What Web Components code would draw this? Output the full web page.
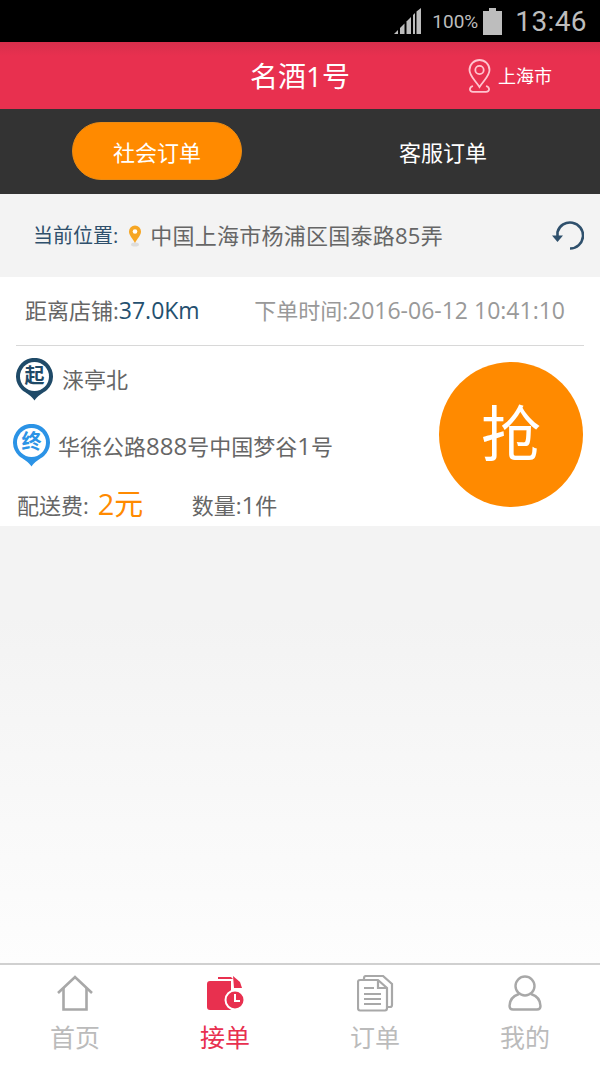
<!DOCTYPE html>
<html lang="zh">
<head>
<meta charset="utf-8">
<title>名酒1号</title>
<style>
    html, body { margin: 0; padding: 0; }
    body {
        width: 600px;
        height: 1067px;
        overflow: hidden;
        display: flex;
        flex-direction: column;
        font-family: "Open Sans", "Noto Sans CJK SC", sans-serif;
    }
    page-body { flex: 1; }
</style>
</head>
<body>
<status-bar></status-bar>
<app-header heading="名酒1号" city="上海市"></app-header>
<order-tabs></order-tabs>
<page-body>
    <location-bar address="中国上海市杨浦区国泰路85弄"></location-bar>
    <order-card></order-card>
</page-body>
<tab-bar>
    <tab-item label="首页">
        <svg width="36" height="36" viewBox="0 0 36 36" fill="none" stroke="#a8a8a8" stroke-width="2.6">
            <path d="M1 18 L18 2 L35 18"/>
            <path d="M6.5 13 V34.5 H29.5 V13"/>
        </svg>
    </tab-item>
    <tab-item label="接单" active>
        <svg width="37" height="36" viewBox="0 0 37 36">
            <path d="M11 2 H24 L26 4 H11 Z" fill="#e8304f"/>
            <path d="M26 1 L33 7 L35 13 H27 Z" fill="#e8304f"/>
            <path d="M3 6 H24 V28 H28 V35 H3 Q0 35 0 32 V9 Q0 6 3 6 Z" fill="#e8304f"/>
            <circle cx="28" cy="25" r="9.5" fill="#e8304f" stroke="#fff" stroke-width="2"/>
            <path d="M28 19 V26 H33" fill="none" stroke="#fff" stroke-width="2"/>
        </svg>
    </tab-item>
    <tab-item label="订单">
        <svg width="37" height="37" viewBox="0 0 37 37" fill="none" stroke="#a8a8a8" stroke-width="2.2">
            <path d="M7 5 V3 Q7 1 9 1 H26 L35 9 V30 Q35 32 33 32 H31"/>
            <path d="M3 5 H21 L30 13 V33 Q30 35.5 28 35.5 H3 Q1 35.5 1 33 V7 Q1 5 3 5 Z" fill="#fff"/>
            <path d="M21 5 V13 H30"/>
            <path d="M7 13 H17 M7 19 H24 M7 24 H24 M7 29 H24"/>
        </svg>
    </tab-item>
    <tab-item label="我的">
        <svg width="34" height="36" viewBox="0 0 34 36" fill="none" stroke="#a8a8a8" stroke-width="2.4">
            <circle cx="17" cy="11" r="9.5"/>
            <path d="M11 19 C5 21 1.5 25 1.5 31 Q1.5 34.5 5 34.5 H29 Q32.5 34.5 32.5 31 C32.5 25 29 21 23 19"/>
        </svg>
    </tab-item>
</tab-bar>

<script>
class StatusBar extends HTMLElement {
    constructor() {
        super();
        this.attachShadow({ mode: "open" });
        this.shadowRoot.innerHTML = `
            <style>
                :host {
                    display: flex;
                    align-items: center;
                    justify-content: flex-end;
                    height: 42px;
                    padding-right: 13px;
                    background: #000;
                    color: #bdbdbd;
                    font-family: Roboto, sans-serif;
                }
                .pct { font-size: 19px; margin: 0 5px 0 11px; }
                .time { font-size: 28px; margin-left: 13px; letter-spacing: 0.4px; }
                svg { display: block; }
            </style>
            <svg width="27" height="27" viewBox="0 0 27 27" fill="#bdbdbd">
                <path d="M0 26 L4 22 V26 Z"/>
                <path d="M6 26 V20 L10.5 15.5 V26 Z"/>
                <path d="M12.5 26 V13.5 L17 9 V26 Z"/>
                <path d="M19 26 V7 L21 5 V26 Z"/>
                <path d="M22.5 26 V3.5 L27 0 V26 Z"/>
            </svg>
            <span class="pct">100%</span>
            <svg width="19" height="27" viewBox="0 0 19 27" fill="#bdbdbd">
                <path d="M6 0 H13 V3 H19 V27 H0 V3 H6 Z"/>
            </svg>
            <span class="time">13:46</span>
        `;
    }
}

class AppHeader extends HTMLElement {
    constructor() {
        super();
        this.attachShadow({ mode: "open" });
        this.shadowRoot.innerHTML = `
            <style>
                :host {
                    display: grid;
                    grid-template-columns: 1fr auto 1fr;
                    align-items: center;
                    height: 67px;
                    background: linear-gradient(#d82f4c, #e8304f 14px);
                    color: #fff;
                }
                .title { grid-column: 2; font-size: 28px; line-height: 36px; }
                .city {
                    display: flex;
                    align-items: center;
                    justify-content: flex-end;
                    gap: 7px;
                    padding-right: 48px;
                    font-size: 18px;
                    line-height: 24px;
                }
                svg { display: block; }
            </style>
            <div class="title"></div>
            <div class="city">
                <svg width="23" height="34" viewBox="0 0 23 34" fill="none" stroke="#ffc4cf" stroke-width="1.8">
                    <path d="M11.5 28 C7 21 1.5 17 1.5 11 A10 10 0 0 1 21.5 11 C21.5 17 16 21 11.5 28 Z"/>
                    <circle cx="11.5" cy="11" r="4.2"/>
                    <path d="M5 27 C1 28 0.8 32.8 5 32.8 H18 C22.2 32.8 22 28 18 27"/>
                </svg>
                <span></span>
            </div>
        `;
    }

    connectedCallback() {
        this.shadowRoot.querySelector(".title").textContent = this.getAttribute("heading");
        this.shadowRoot.querySelector(".city span").textContent = this.getAttribute("city");
    }
}

class OrderTabs extends HTMLElement {
    constructor() {
        super();
        this.attachShadow({ mode: "open" });
        this.shadowRoot.innerHTML = `
            <style>
                :host {
                    display: flex;
                    justify-content: center;
                    align-items: center;
                    gap: 116px;
                    height: 85px;
                    background: #333;
                    color: #fff;
                    font-size: 22px;
                }
                div {
                    width: 170px;
                    height: 58px;
                    box-sizing: border-box;
                    display: flex;
                    align-items: center;
                    justify-content: center;
                    border-radius: 29px;
                    margin-top: -1px;
                }
                .on { background: #ff8a00; border: 1px solid #e98a14; }
            </style>
            <div class="on">社会订单</div>
            <div>客服订单</div>
        `;
    }
}

class PageBody extends HTMLElement {
    constructor() {
        super();
        this.attachShadow({ mode: "open" });
        this.shadowRoot.innerHTML = `
            <style>
                :host {
                    display: block;
                    background: linear-gradient(#f3f3f3 55%, #fdfdfd);
                }
            </style>
            <slot></slot>
        `;
    }
}

class LocationBar extends HTMLElement {
    constructor() {
        super();
        this.attachShadow({ mode: "open" });
        this.shadowRoot.innerHTML = `
            <style>
                :host {
                    display: flex;
                    align-items: center;
                    height: 83px;
                    padding: 0 16px 0 33px;
                    box-sizing: border-box;
                    color: #666;
                    font-size: 22px;
                }
                .label { font-size: 20px; color: #2f506c; margin-top: -2px; }
                .pin { margin: 0 8px 0 10px; }
                .addr { flex: 1; margin-top: -4px; letter-spacing: 0.25px; }
                svg { display: block; }
            </style>
            <span class="label">当前位置:</span>
            <svg class="pin" width="14" height="22" viewBox="0 0 14 22">
                <ellipse cx="7" cy="19.5" rx="4" ry="2" fill="#ddd"/>
                <path d="M7 18 C4.5 13 1 10.5 1 6.5 A6 6 0 0 1 13 6.5 C13 10.5 9.5 13 7 18 Z" fill="#f6a623"/>
                <circle cx="7" cy="6.5" r="2.3" fill="#fff"/>
            </svg>
            <span class="addr"></span>
            <svg width="32" height="32" viewBox="0 0 32 32" fill="none">
                <path d="M18 28.5 A13 13 0 1 0 5.5 12 V16" stroke="#2f506c" stroke-width="2.6"/>
                <path d="M0 15.5 H11 L5.5 22 Z" fill="#2f506c"/>
            </svg>
        `;
    }

    connectedCallback() {
        this.shadowRoot.querySelector(".addr").textContent = this.getAttribute("address");
    }
}

class RoutePin extends HTMLElement {
    constructor() {
        super();
        this.attachShadow({ mode: "open" });
        this.shadowRoot.innerHTML = `
            <style>
                :host {
                    position: relative;
                    display: block;
                    width: 37px;
                    height: 43px;
                    flex: none;
                }
                svg { display: block; }
                span {
                    position: absolute;
                    left: 0;
                    top: 0;
                    width: 37px;
                    height: 37px;
                    line-height: 36px;
                    text-align: center;
                    font-size: 20px;
                    font-weight: 700;
                }
            </style>
            <svg width="37" height="43" viewBox="0 0 37 43">
                <path d="M18.5 42.5 C16 38 10 35 6 32 A18.5 18.5 0 1 1 31 32 C27 35 21 38 18.5 42.5 Z"/>
                <circle cx="18.5" cy="18.5" r="14.5" fill="#fff"/>
            </svg>
            <span></span>
        `;
    }

    connectedCallback() {
        const color = this.getAttribute("color");
        this.shadowRoot.querySelector("path").setAttribute("fill", color);
        const span = this.shadowRoot.querySelector("span");
        span.textContent = this.getAttribute("text");
        span.style.color = color;
    }
}

class OrderCard extends HTMLElement {
    constructor() {
        super();
        this.attachShadow({ mode: "open" });
        this.shadowRoot.innerHTML = `
            <style>
                :host {
                    display: block;
                    position: relative;
                    height: 249px;
                    background: #fff;
                    color: #666;
                    font-size: 22px;
                    box-sizing: border-box;
                    padding: 0 16px;
                }
                .top {
                    display: flex;
                    justify-content: space-between;
                    align-items: center;
                    height: 69px;
                    padding: 0 19px 4px 9px;
                    box-sizing: border-box;
                    border-bottom: 1px solid #d8d8d8;
                }
                .n { font-size: 23px; }
                .n24 { font-size: 24px; }
                .dist { color: #24506f; }
                .time { color: #999; }
                .from, .to, .meta {
                    display: flex;
                    align-items: center;
                }
                .from { margin-top: 12px; gap: 9px; }
                .from > span { margin-top: -4px; }
                .to { margin-top: 23px; margin-left: -3px; gap: 8px; }
                .meta { margin-top: 19px; padding-left: 1px; }
                .fee {
                    color: #ff8a00;
                    font-size: 29px;
                    margin-left: 9px;
                    width: 94px;
                    line-height: 36px;
                }
                .grab {
                    position: absolute;
                    left: 439px;
                    top: 85px;
                    width: 144px;
                    height: 145px;
                    border-radius: 50%;
                    background: #ff8a00;
                    color: #fff;
                    font-size: 60px;
                    display: flex;
                    align-items: center;
                    justify-content: center;
                    padding-bottom: 10px;
                    box-sizing: border-box;
                }
            </style>
            <div class="top">
                <span>距离店铺:<span class="dist n">37.0Km</span></span>
                <span class="time">下单时间:<span class="n">2016-06-12 10:41:10</span></span>
            </div>
            <div class="from">
                <route-pin text="起" color="#1f4a68"></route-pin>
                <span>涞亭北</span>
            </div>
            <div class="to">
                <route-pin text="终" color="#2b93e6"></route-pin>
                <span>华徐公路<span class="n24">888</span>号中国梦谷<span class="n24">1</span>号</span>
            </div>
            <div class="meta">
                <span>配送费:</span>
                <span class="fee">2元</span>
                <span>数量:<span class="n24">1</span>件</span>
            </div>
            <div class="grab">抢</div>
        `;
    }
}

class TabBar extends HTMLElement {
    constructor() {
        super();
        this.attachShadow({ mode: "open" });
        this.shadowRoot.innerHTML = `
            <style>
                :host {
                    display: grid;
                    grid-template-columns: repeat(4, 1fr);
                    height: 104px;
                    box-sizing: border-box;
                    border-top: 2px solid #d0d0d0;
                    background: #fff;
                }
            </style>
            <slot></slot>
        `;
    }
}

class TabItem extends HTMLElement {
    constructor() {
        super();
        this.attachShadow({ mode: "open" });
        this.shadowRoot.innerHTML = `
            <style>
                :host {
                    display: flex;
                    flex-direction: column;
                    align-items: center;
                    padding-top: 10px;
                    color: #bbb;
                    font-size: 25px;
                }
                :host([active]) { color: #e8304f; }
                .icon { height: 37px; display: flex; align-items: flex-start; }
                .label { margin-top: 7px; line-height: 36px; }
            </style>
            <div class="icon"><slot></slot></div>
            <div class="label"></div>
        `;
    }

    connectedCallback() {
        this.shadowRoot.querySelector(".label").textContent = this.getAttribute("label");
    }
}

customElements.define("status-bar", StatusBar);
customElements.define("app-header", AppHeader);
customElements.define("order-tabs", OrderTabs);
customElements.define("page-body", PageBody);
customElements.define("location-bar", LocationBar);
customElements.define("route-pin", RoutePin);
customElements.define("order-card", OrderCard);
customElements.define("tab-bar", TabBar);
customElements.define("tab-item", TabItem);
</script>
</body>
</html>
